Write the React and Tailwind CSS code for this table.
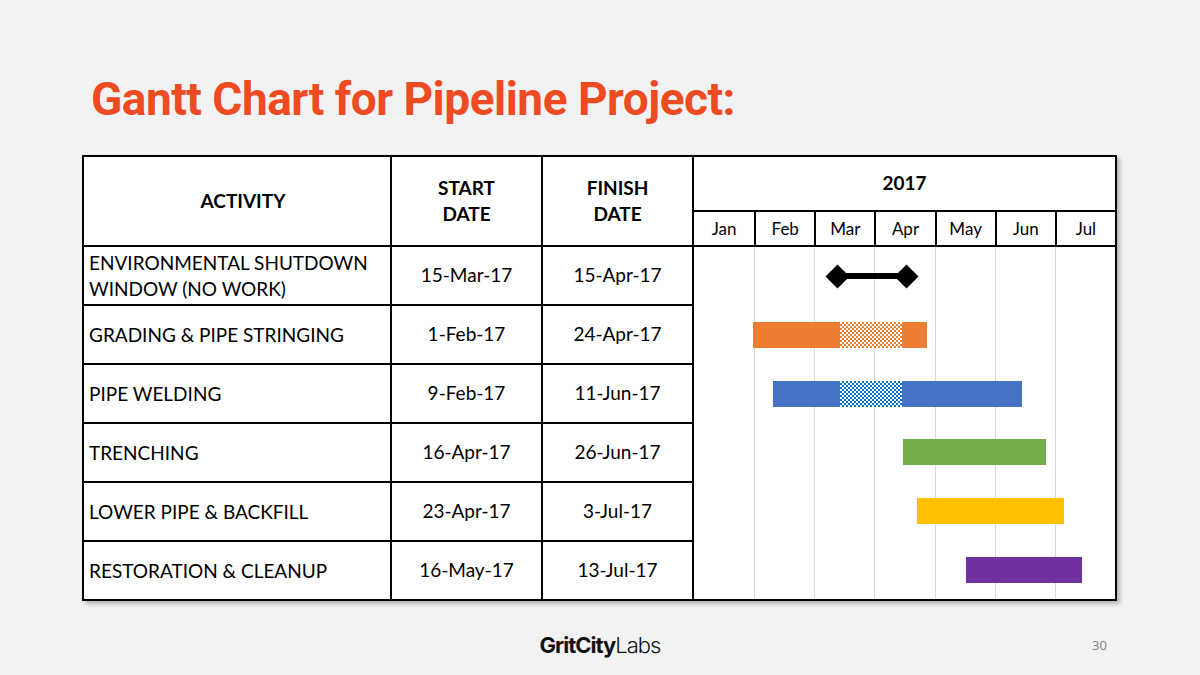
import React from 'react';

const months = ['Jan', 'Feb', 'Mar', 'Apr', 'May', 'Jun', 'Jul'];

const rows = [
  { name: ['ENVIRONMENTAL SHUTDOWN', 'WINDOW (NO WORK)'], start: '15-Mar-17', finish: '15-Apr-17', kind: 'window', left: 147, width: 62 },
  { name: ['GRADING & PIPE STRINGING'], start: '1-Feb-17', finish: '24-Apr-17', kind: 'orange', left: 59, width: 174, hatch: 87 },
  { name: ['PIPE WELDING'], start: '9-Feb-17', finish: '11-Jun-17', kind: 'blue', left: 79, width: 249, hatch: 67 },
  { name: ['TRENCHING'], start: '16-Apr-17', finish: '26-Jun-17', kind: 'green', left: 209, width: 143 },
  { name: ['LOWER PIPE & BACKFILL'], start: '23-Apr-17', finish: '3-Jul-17', kind: 'yellow', left: 223, width: 147 },
  { name: ['RESTORATION & CLEANUP'], start: '16-May-17', finish: '13-Jul-17', kind: 'purple', left: 272, width: 116 },
];

const barColor = {
  orange: 'bg-[#ed7d31]',
  blue: 'bg-[#4472c4]',
  green: 'bg-[#70ad47]',
  yellow: 'bg-[#ffc000]',
  purple: 'bg-[#7030a0]',
};

const hatchColor = {
  orange: 'bg-[repeating-conic-gradient(#ed7d31_0_25%,#ffffff_0_50%)]',
  blue: 'bg-[repeating-conic-gradient(#0070c0_0_25%,#ffffff_0_50%)]',
};

const Bar = ({ row }) => {
  if (row.kind === 'window') {
    return (
      <div className="flex items-center" style={{ marginLeft: row.left - 12, width: row.width + 24 }}>
        <div className="h-[17px] w-[17px] shrink-0 rotate-45 bg-black" />
        <div className="-mx-[4px] h-[6px] flex-1 bg-black" />
        <div className="h-[17px] w-[17px] shrink-0 rotate-45 bg-black" />
      </div>
    );
  }
  return (
    <div className={`flex h-[26px] ${barColor[row.kind]}`} style={{ marginLeft: row.left, width: row.width }}>
      {row.hatch !== undefined && (
        <div
          className={`h-full w-[62px] bg-[length:4px_4px] ${hatchColor[row.kind]}`}
          style={{ marginLeft: row.hatch }}
        />
      )}
    </div>
  );
};

export default function App() {
  return (
    <div className="relative h-[675px] w-[1200px] overflow-hidden bg-[#f2f2f2] font-['Lato','Liberation_Sans',sans-serif] text-black">
      <h1 className="absolute left-[91px] top-[76px] whitespace-nowrap font-['Roboto',sans-serif] text-[46px] font-bold leading-none tracking-[-0.5px] text-[#ee4b23]">
        Gantt Chart for Pipeline Project:
      </h1>

      <div className="absolute left-[82px] top-[155px] grid h-[446px] w-[1035px] grid-cols-[306px_151px_151px_423px] grid-rows-[88px_repeat(6,59px)] border-2 border-black bg-white shadow-[3px_3px_4px_rgba(0,0,0,0.25)]">
        <div className="flex items-center justify-center pl-3 text-[19px] font-bold">ACTIVITY</div>
        <div className="flex flex-col items-center justify-center border-l-2 border-black text-[19px] font-bold leading-[26px]">
          <span>START</span>
          <span>DATE</span>
        </div>
        <div className="flex flex-col items-center justify-center border-l-2 border-black text-[19px] font-bold leading-[26px]">
          <span>FINISH</span>
          <span>DATE</span>
        </div>
        <div className="flex flex-col border-l-2 border-black">
          <div className="flex h-[53px] items-center justify-center text-[19px] font-bold">2017</div>
          <div className="grid flex-1 grid-cols-7 border-t-2 border-black">
            {months.map((m, i) => (
              <div key={m} className={`flex items-center justify-center text-[17px] ${i ? 'border-l-2 border-black' : ''}`}>
                {m}
              </div>
            ))}
          </div>
        </div>

        {rows.map((row, i) => (
          <React.Fragment key={row.start}>
            <div
              className="col-start-1 flex flex-col justify-center border-t-2 border-black px-[5px] text-[19px] leading-[26px]"
              style={{ gridRowStart: i + 2 }}
            >
              {row.name.map((n) => (
                <span key={n} className="whitespace-nowrap">{n}</span>
              ))}
            </div>
            <div
              className="col-start-2 flex items-center justify-center border-l-2 border-t-2 border-black text-[19px]"
              style={{ gridRowStart: i + 2 }}
            >
              {row.start}
            </div>
            <div
              className="col-start-3 flex items-center justify-center border-l-2 border-t-2 border-black text-[19px]"
              style={{ gridRowStart: i + 2 }}
            >
              {row.finish}
            </div>
          </React.Fragment>
        ))}

        <div className="relative col-start-4 row-span-6 row-start-2 flex flex-col border-l-2 border-t-2 border-black">
          <div className="absolute inset-0 grid grid-cols-7">
            {months.map((m, i) => (
              <div key={m} className={i ? 'border-l border-[#d9d9d9]' : ''} />
            ))}
          </div>
          {rows.map((row) => (
            <div key={row.start} className="relative flex flex-1 items-center">
              <Bar row={row} />
            </div>
          ))}
        </div>
      </div>

      <div className="absolute left-0 right-0 top-[634px] flex justify-center">
        <div className="flex items-baseline font-['Inter',sans-serif] text-[22px] leading-none tracking-[-1px] text-[#111]">
          <span className="font-bold">GritCity</span>
          <span className="font-light">Labs</span>
        </div>
      </div>
      <div className="absolute left-[1092px] top-[636px] font-['Open_Sans',sans-serif] text-[13px] text-[#7f7f7f]">30</div>
    </div>
  );
}
